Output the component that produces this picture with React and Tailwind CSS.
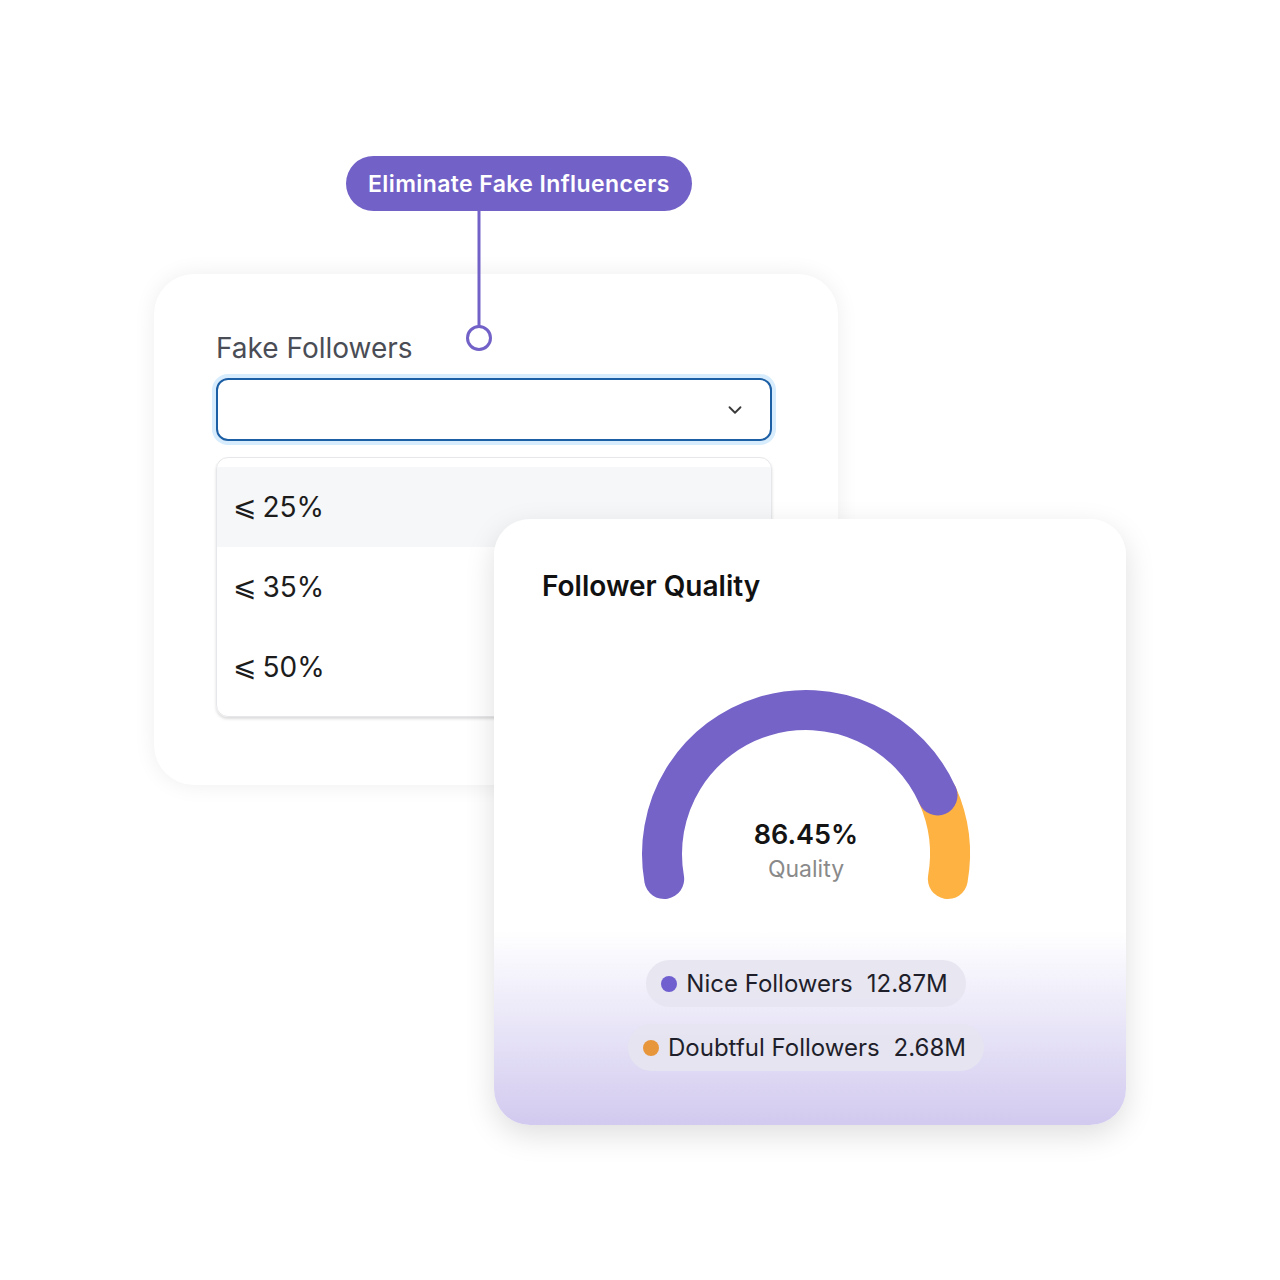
import { ChevronDown } from 'lucide-react'

const OPTIONS = ['25%', '35%', '50%']

const LEGEND = [
  { label: 'Nice Followers', value: '12.87M', dot: 'bg-[#6f5fcf]' },
  { label: 'Doubtful Followers', value: '2.68M', dot: 'bg-[#e8963c]' },
]

// point on the gauge circle, angle in degrees (0 = right, counter-clockwise)
function pt(cx, cy, r, deg) {
  const a = (deg * Math.PI) / 180
  return [cx + r * Math.cos(a), cy - r * Math.sin(a)]
}

function arc(cx, cy, r, from, to) {
  const [x1, y1] = pt(cx, cy, r, from)
  const [x2, y2] = pt(cx, cy, r, to)
  const large = from - to > 180 ? 1 : 0
  return `M${x1} ${y1} A${r} ${r} 0 ${large} 1 ${x2} ${y2}`
}

function Gauge() {
  const cx = 184
  const cy = 174
  const r = 144
  return (
    <div className="relative w-[368px] h-[230px] mx-auto">
      <svg width="368" height="230" viewBox="0 0 368 230">
        <path d={arc(cx, cy, r, 24, -10)} fill="none" stroke="#fdb242" strokeWidth="40" strokeLinecap="round" />
        <path d={arc(cx, cy, r, 190, 24)} fill="none" stroke="#7563c8" strokeWidth="40" strokeLinecap="round" />
      </svg>
      {/* center label */}
      <div className="absolute left-0 right-0 top-[138px] flex flex-col items-center">
        <span className="text-[27px] leading-[34px] font-semibold text-[#141414]">86.45%</span>
        <span className="text-[23px] leading-[34px] text-[#8a8a8a]">Quality</span>
      </div>
    </div>
  )
}

export default function App() {
  return (
    <div className="relative w-[1280px] h-[1280px] bg-white font-['Inter','Liberation_Sans',sans-serif]">
      {/* Callout pill */}
      <div className="pt-[156px] pl-[346px]">
        <div className="inline-flex items-center h-[55px] pt-[2px] px-[22px] rounded-full bg-[#7262c8] text-white text-[23px] font-semibold tracking-[0.4px]">
          Eliminate Fake Influencers
        </div>
      </div>

      {/* Fake followers card */}
      <div className="ml-[154px] mt-[63px] w-[684px] h-[511px] rounded-[40px] bg-white shadow-[0_0_22px_rgba(0,0,0,0.07)] pt-[57px] pl-[62px] pr-[66px]">
        <div className="text-[28px] leading-[34px] text-[#4a4d55]">Fake Followers</div>
        <div className="mt-[13px] h-[63px] rounded-[12px] border-2 border-[#1d5fa5] ring-4 ring-[#d7ecfc] flex items-center justify-end pr-[24px]">
          <ChevronDown className="w-[22px] h-[22px] text-[#3a3a3a]" strokeWidth={2} />
        </div>
        <div className="mt-[16px] py-[9px] rounded-[12px] border border-[#e6e7ea] shadow-[0_2px_3px_rgba(0,0,0,0.14)] overflow-hidden">
          {OPTIONS.map((o, i) => (
            <div
              key={o}
              className={`h-[80px] flex items-center pl-[16px] text-[28px] text-[#1c1c1c] ${i === 0 ? 'bg-[#f6f7f8]' : ''}`}
            >
              <span className="font-['DejaVu_Sans',sans-serif] text-[28px] mr-[6px]">⩽</span>
              {o}
            </div>
          ))}
        </div>
      </div>

      {/* Connector from pill to card */}
      <svg className="absolute left-[464px] top-[210px]" width="30" height="145" viewBox="0 0 30 145">
        <line x1="15" y1="0" x2="15" y2="116" stroke="#7262c8" strokeWidth="3" />
        <circle cx="15" cy="128" r="11.5" fill="white" stroke="#7262c8" strokeWidth="3" />
      </svg>

      {/* Follower quality card */}
      <div className="absolute left-[494px] top-[519px] w-[632px] h-[606px] rounded-[36px] bg-linear-to-b from-white from-[68%] to-[#d2caef] shadow-[0_10px_30px_rgba(0,0,0,0.13)] pt-[50px] pl-[48px] pr-[56px]">
        <div className="text-[28px] leading-[34px] font-semibold text-[#111]">Follower Quality</div>
        <div className="mt-[77px] -ml-[48px] -mr-[56px] pl-[128px]">
          <div className="w-[368px] h-[230px]">
            <Gauge />
          </div>
        </div>
        <div className="mt-[50px] flex flex-col items-center gap-[17px]">
          {LEGEND.map((l) => (
            <div key={l.label} className="h-[47px] rounded-full bg-[#e6e4f0]/90 flex items-center pl-[15px] pr-[18px] text-[24px] text-[#1f1f2b]">
              <span className={`w-[16px] h-[16px] rounded-full ${l.dot} mr-[9px]`} />
              <span>{l.label}</span>
              <span className="ml-[14px]">{l.value}</span>
            </div>
          ))}
        </div>
      </div>
    </div>
  )
}
